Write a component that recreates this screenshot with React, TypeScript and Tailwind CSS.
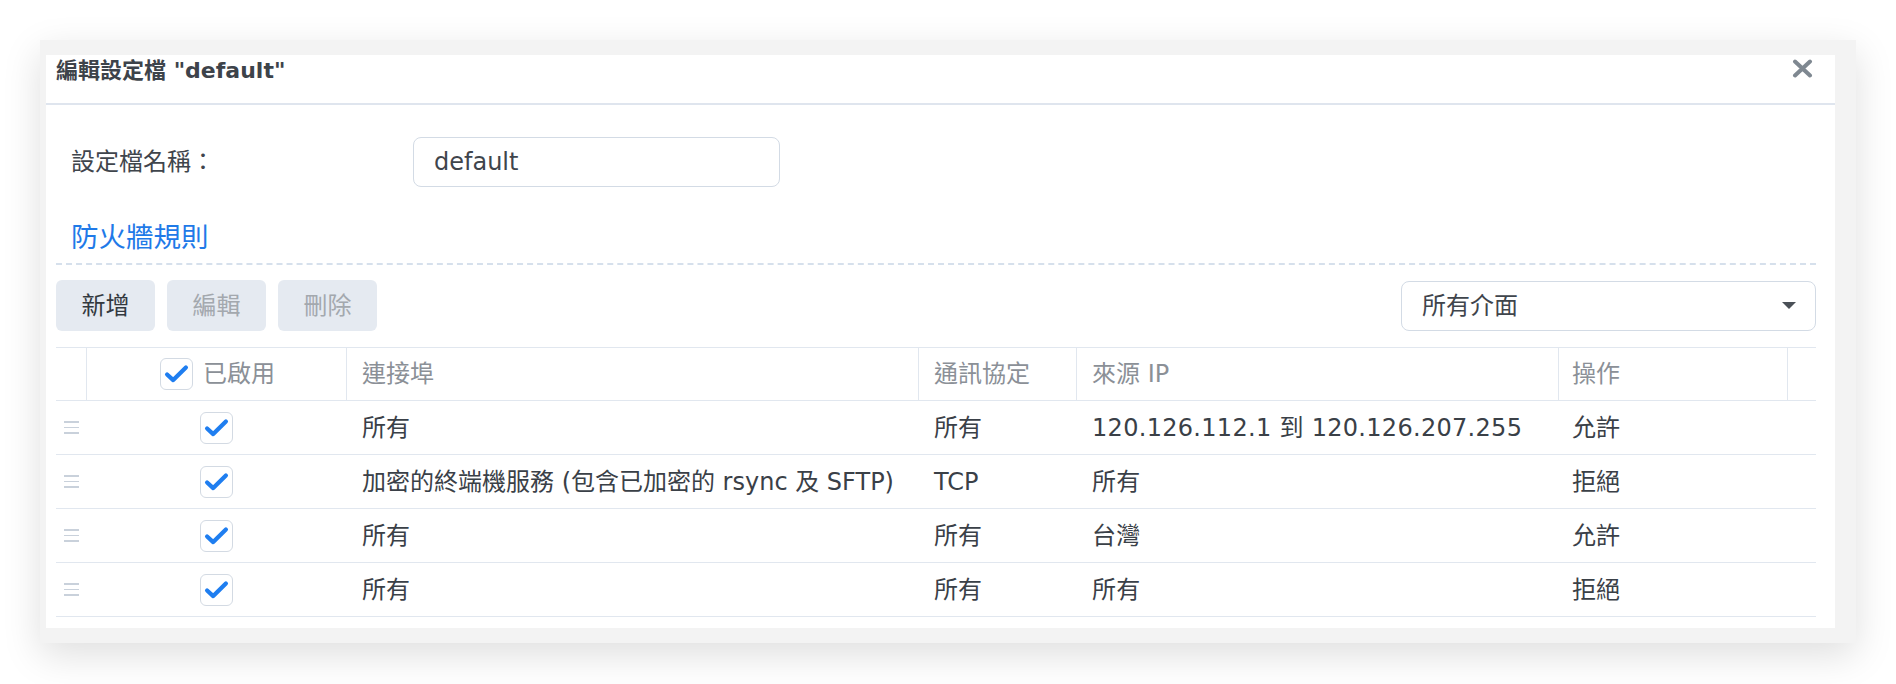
import React from "react";

interface Rule {
  port: string;
  protocol: string;
  source: string;
  action: string;
}

const rules: Rule[] = [
  { port: "所有", protocol: "所有", source: "120.126.112.1 到 120.126.207.255", action: "允許" },
  { port: "加密的終端機服務 (包含已加密的 rsync 及 SFTP)", protocol: "TCP", source: "所有", action: "拒絕" },
  { port: "所有", protocol: "所有", source: "台灣", action: "允許" },
  { port: "所有", protocol: "所有", source: "所有", action: "拒絕" },
];

const cols = "grid grid-cols-[30px_260px_572px_158px_482px_229px_1fr]";

const CheckBox: React.FC = () => (
  <span className="w-[33px] h-[32px] rounded-[6px] border border-[#d3dae3] bg-white flex items-center justify-center shrink-0">
    <svg width="33" height="32" viewBox="0 0 33 32" fill="none">
      <path d="M6.5 16.5 L13 22.5 L26.5 9" stroke="#1f7ef0" strokeWidth="4.5" strokeLinecap="round" strokeLinejoin="round" />
    </svg>
  </span>
);

const DragHandle: React.FC = () => (
  <span className="flex flex-col gap-[4px] w-[15px]">
    <span className="h-[1.5px] bg-[#c9d1db]"></span>
    <span className="h-[1.5px] bg-[#c9d1db]"></span>
    <span className="h-[1.5px] bg-[#c9d1db]"></span>
  </span>
);

export default function App() {
  return (
    <div className="w-[1896px] h-[684px] bg-white pt-[40px] pl-[40px] font-['DejaVu_Sans','Noto_Sans_CJK_TC',sans-serif]">
      {/* 外框 */}
      <div className="w-[1816px] h-[603px] bg-[#f3f3f3] pt-[15px] pl-[6px] pr-[21px] pb-[15px] shadow-[0_12px_36px_rgba(0,0,0,0.13)]">
        <div className="w-[1789px] h-[573px] bg-white flex flex-col">
          {/* 標題列 */}
          <div className="h-[50px] border-b-2 border-[#dfe5ee] flex items-start justify-between pl-[10px] pr-[22px]">
            <h1 className="text-[22px] leading-[32px] font-bold text-[#3d434a]">編輯設定檔 "default"</h1>
            <svg className="mt-[4px]" width="21" height="19" viewBox="0 0 21 19">
              <path d="M3 2.5 L18 16.5 M18 2.5 L3 16.5" stroke="#7f8891" strokeWidth="4" strokeLinecap="round" />
            </svg>
          </div>

          <div className="pl-[10px] pr-[19px] flex flex-col">
            {/* 設定檔名稱 */}
            <div className="flex items-center mt-[32px] pl-[15px]">
              <span className="w-[342px] text-[24px] leading-[30px] text-[#3f454c]">設定檔名稱：</span>
              <div className="w-[367px] h-[50px] border border-[#d3dbe5] rounded-[8px] flex items-center pl-[20px] text-[24px] text-[#3f454c]">
                default
              </div>
            </div>

            <h2 className="mt-[32px] pl-[15px] h-[36px] text-[27.5px] leading-[36px] text-[#1f7ae8]">防火牆規則</h2>
            <div className="mt-[8px] border-t-2 border-dashed border-[#d6e0ec]"></div>

            {/* 工具列 */}
            <div className="mt-[15px] flex items-start justify-between">
              <div className="flex gap-[12px]">
                <button className="w-[99px] h-[51px] rounded-[6px] bg-[#e5eaf1] text-[24px] text-[#33393f]">新增</button>
                <button className="w-[99px] h-[51px] rounded-[6px] bg-[#e5eaf1] text-[24px] text-[#a3a8ae]">編輯</button>
                <button className="w-[99px] h-[51px] rounded-[6px] bg-[#e5eaf1] text-[24px] text-[#a3a8ae]">刪除</button>
              </div>
              <div className="mt-[1px] w-[415px] h-[50px] border border-[#d3dbe5] rounded-[8px] flex items-center justify-between pl-[20px] pr-[19px]">
                <span className="text-[24px] text-[#3f454c]">所有介面</span>
                <svg width="14" height="8" viewBox="0 0 14 8">
                  <path d="M0 0 H14 L7 7 Z" fill="#4a5057" />
                </svg>
              </div>
            </div>

            {/* 規則表格 */}
            <div className="mt-[16px] border-t border-[#e1e7ef]">
              <div className={`${cols} h-[53px] border-b border-[#e1e7ef] text-[24px] text-[#8b9097]`}>
                <div></div>
                <div className="border-l border-[#e1e7ef] flex items-center justify-center gap-[10px] pl-[2px]">
                  <CheckBox />
                  <span>已啟用</span>
                </div>
                <div className="border-l border-[#e1e7ef] flex items-center pl-[15px]">連接埠</div>
                <div className="border-l border-[#e1e7ef] flex items-center pl-[15px]">通訊協定</div>
                <div className="border-l border-[#e1e7ef] flex items-center pl-[15px]">來源 IP</div>
                <div className="border-l border-[#e1e7ef] flex items-center pl-[13px]">操作</div>
                <div className="border-l border-[#e1e7ef]"></div>
              </div>
              {rules.map((rule, idx) => (
                <div key={idx} className={`${cols} h-[54px] border-b border-[#e1e7ef] text-[24px] text-[#3a4047]`}>
                  <div className="flex items-center justify-center pl-[1px]">
                    <DragHandle />
                  </div>
                  <div className="flex items-center justify-center pl-[1px]">
                    <CheckBox />
                  </div>
                  <div className="flex items-center pl-[16px] whitespace-nowrap">{rule.port}</div>
                  <div className="flex items-center pl-[16px]">{rule.protocol}</div>
                  <div className="flex items-center pl-[16px] whitespace-nowrap tracking-[0.3px]">{rule.source}</div>
                  <div className="flex items-center pl-[14px]">{rule.action}</div>
                  <div></div>
                </div>
              ))}
            </div>
          </div>
        </div>
      </div>
    </div>
  );
}
